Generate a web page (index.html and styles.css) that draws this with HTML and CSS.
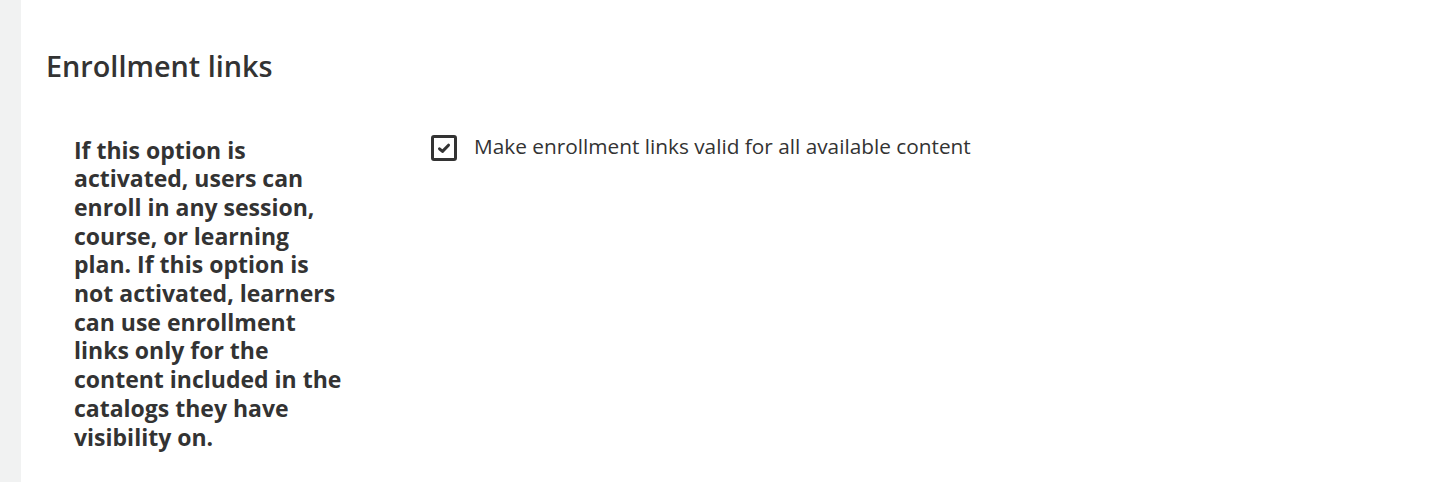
FILE: index.html
```html
<!DOCTYPE html>
<html>
<head>
<meta charset="utf-8">
<link rel="stylesheet" href="styles.css">
</head>
<body>
<div class="page">
  <aside class="rail"></aside>
  <main class="content">
    <h2 class="title">Enrollment links</h2>
    <div class="row">
      <p class="desc">If this option is activated, users can enroll in any session, course, or learning plan. If this option is not activated, learners can use enrollment links only for the content included in the catalogs they have visibility on.</p>
      <label class="option">
        <span class="box">
          <svg width="14" height="12" viewBox="0 0 14 12"><path d="M2.5 6.8 L5.5 9.4 L11.5 3.2" fill="none" stroke="#333" stroke-width="3" stroke-linecap="round" stroke-linejoin="round"/></svg>
        </span>
        <span class="label">Make enrollment links valid for all available content</span>
      </label>
    </div>
  </main>
</div>
</body>
</html>
```
FILE: styles.css
```css
html, body {
  margin: 0;
  padding: 0;
  background: #fff;
}
body {
  font-family: "Open Sans", "Liberation Sans", sans-serif;
  color: #333;
}
.page {
  display: flex;
  height: 482px;
  overflow: hidden;
}
.rail {
  width: 21px;
  flex: none;
  background: #f1f2f2;
}
.content {
  flex: 1;
  padding: 0 0 0 25px;
}
.title {
  margin: 46px 0 0 0;
  font-size: 28.8px;
  font-weight: 600;
  line-height: 40px;
  color: #333;
}
.row {
  display: flex;
  align-items: flex-start;
  margin-top: 47px;
}
.desc {
  margin: 0 0 0 28px;
  padding-top: 2.5px;
  width: 272px;
  flex: none;
  font-size: 23px;
  font-weight: 700;
  line-height: 28.7px;
  color: #333;
}
.option {
  display: flex;
  align-items: flex-start;
  margin-left: 85px;
}
.box {
  box-sizing: border-box;
  width: 26px;
  height: 26px;
  border: 3px solid #333;
  border-radius: 3px;
  display: flex;
  align-items: center;
  justify-content: center;
  margin-top: 2px;
  flex: none;
}
.label {
  margin-left: 17px;
  font-size: 20.8px;
  line-height: 26px;
  color: #333;
}
```
